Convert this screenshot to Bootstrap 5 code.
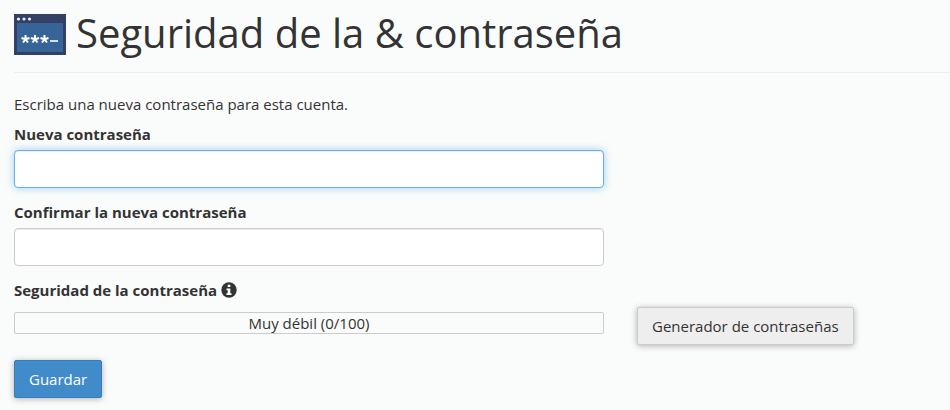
<!DOCTYPE html>
<html lang="es">
<head>
<meta charset="utf-8">
<meta name="viewport" content="width=device-width, initial-scale=1">
<title>Seguridad de la &amp; contraseña</title>
<link href="https://cdn.jsdelivr.net/npm/bootstrap@5.3.0/dist/css/bootstrap.min.css" rel="stylesheet">
<style>
  body { background: #fafcfb; color: #333; font-family: "Open Sans", sans-serif; font-size: 15px; line-height: 22px; }
  .page { padding: 9px 0 12px 14px; }
  .page-title { border-bottom: 1px solid #eee; padding-bottom: 15px; margin-bottom: 20px; gap: 10px; }
  .page-title h1 { font-size: 40px; line-height: 48px; font-weight: 400; color: #333; }
  .page-title svg { margin-top: 2px; }
  .field-col { flex: 0 1 590px; max-width: 590px; }
  .field-group { margin-bottom: 13px; }
  .form-label { font-weight: 700; margin-bottom: 5px; }
  .form-control { height: 38px; border-color: #ccc; border-radius: 4px; box-shadow: inset 0 1px 1px rgba(0,0,0,.075); }
  .form-control:focus { border-color: #66afe9; box-shadow: inset 0 1px 1px rgba(0,0,0,.075), 0 0 8px rgba(102,175,233,.6); }
  .strength-title { margin-bottom: 6px; }
  .strength-row { column-gap: 33px; margin-bottom: 15px; }
  .meter { height: 22px; margin-top: 5px; border: 1px solid #ccc; border-radius: 2px; line-height: 20px; }
  .btn { font-size: 15px; line-height: 22px; padding: 7px 14px; border-radius: 2px; box-shadow: 0 1px 6px rgba(0,0,0,.3); }
  .btn-generate { --bs-btn-color: #333; --bs-btn-bg: #eee; --bs-btn-border-color: #ccc; --bs-btn-hover-bg: #e2e2e2; --bs-btn-hover-border-color: #bbb; }
  .btn-save { --bs-btn-color: #fff; --bs-btn-bg: #428bca; --bs-btn-border-color: #357ebd; --bs-btn-hover-color: #fff; --bs-btn-hover-bg: #3276b1; --bs-btn-hover-border-color: #285e8e; }
</style>
<script src="https://cdn.jsdelivr.net/npm/bootstrap@5.3.0/dist/js/bootstrap.bundle.min.js" defer></script>
</head>
<body>
<main class="page">
  <header class="page-title d-flex align-items-center">
    <svg class="flex-shrink-0" width="52" height="41" viewBox="0 0 52 41" aria-hidden="true">
      <rect width="52" height="41" fill="#343f66"/>
      <rect x="3" y="9" width="46" height="29" fill="#376498"/>
      <g fill="#e9eef5"><circle cx="4.5" cy="5" r="1.6"/><circle cx="10" cy="5" r="1.6"/><circle cx="15.5" cy="5" r="1.6"/></g>
      <g stroke="#fff" stroke-width="2" fill="none">
        <path d="M11.5 21v4.5M7.5 24l4 1.3M15.5 24l-4 1.3M9 28.5l2.5-3.2M14 28.5l-2.5-3.2"/>
        <path d="M21 21v4.5M17 24l4 1.3M25 24l-4 1.3M18.5 28.5l2.5-3.2M23.5 28.5l-2.5-3.2"/>
        <path d="M30.5 21v4.5M26.5 24l4 1.3M34.5 24l-4 1.3M28 28.5l2.5-3.2M33 28.5l-2.5-3.2"/>
      </g>
      <path d="M36 27h8" stroke="#d3deea" stroke-width="2"/>
    </svg>
    <h1 class="mb-0">Seguridad de la &amp; contraseña</h1>
  </header>
  <form>
    <p class="mb-2">Escriba una nueva contraseña para esta cuenta.</p>
    <div class="field-col field-group">
      <label class="form-label d-block" for="new-password">Nueva contraseña</label>
      <input class="form-control" type="password" id="new-password" autocomplete="new-password" autofocus>
    </div>
    <div class="field-col field-group">
      <label class="form-label d-block" for="confirm-password">Confirmar la nueva contraseña</label>
      <input class="form-control" type="password" id="confirm-password" autocomplete="new-password">
    </div>
    <div class="strength-title d-flex align-items-center gap-1">
      <strong id="strength-label">Seguridad de la contraseña</strong>
      <svg width="16" height="16" viewBox="0 0 16 16" role="img" aria-label="Información">
        <circle cx="8" cy="8" r="7.7" fill="#333"/>
        <path d="M6.7 2.8h2.6v2.2H6.7zM5.5 6.5h3.8v4.7h1.2v1.8h-5v-1.8h1.2V8.3H5.5z" fill="#fff"/>
      </svg>
    </div>
    <div class="strength-row d-flex align-items-start">
      <div class="field-col meter text-center" role="meter" aria-labelledby="strength-label" aria-valuemin="0" aria-valuemax="100" aria-valuenow="0">Muy débil (0/100)</div>
      <button type="button" class="btn btn-generate text-nowrap flex-shrink-0">Generador de contraseñas</button>
    </div>
    <button type="submit" class="btn btn-save">Guardar</button>
  </form>
</main>
</body>
</html>
